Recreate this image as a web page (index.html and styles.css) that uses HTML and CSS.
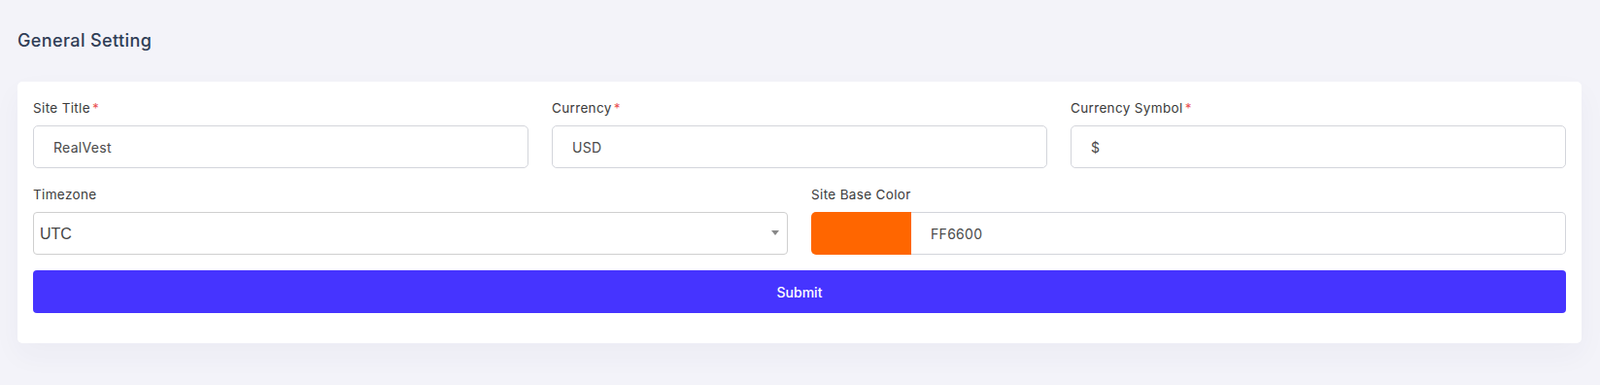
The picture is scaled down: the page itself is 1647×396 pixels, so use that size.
FILE: index.html
```html
<!DOCTYPE html>
<html>
<head>
    <title>General Setting</title>
    <link rel="stylesheet" href="styles.css">
</head>
<body>
    <div class="page">
        <h4 class="page-title">General Setting</h4>
        <div class="card">
            <form class="settings-form">
                <div class="row row-3">
                    <div class="form-group">
                        <label>Site Title<span class="req">*</span></label>
                        <input type="text" class="form-control" value="RealVest">
                    </div>
                    <div class="form-group">
                        <label>Currency<span class="req">*</span></label>
                        <input type="text" class="form-control" value="USD">
                    </div>
                    <div class="form-group">
                        <label>Currency Symbol<span class="req">*</span></label>
                        <input type="text" class="form-control" value="$">
                    </div>
                </div>
                <div class="row row-2">
                    <div class="form-group">
                        <label>Timezone</label>
                        <div class="select-wrap">
                            <select class="select">
                                <option>UTC</option>
                            </select>
                        </div>
                    </div>
                    <div class="form-group">
                        <label>Site Base Color</label>
                        <div class="color-group">
                            <span class="swatch"></span>
                            <input type="text" class="color-code" value="FF6600">
                        </div>
                    </div>
                </div>
                <button type="submit" class="btn-submit">Submit</button>
            </form>
        </div>
    </div>
</body>
</html>
```

FILE: styles.css
```css
body {
    margin: 0;
    background-color: #f3f3f9;
    font-family: Inter, "Noto Sans", sans-serif;
    color: #34495e;
}
.page {
    padding: 28px 19px 40px 18px;
}
.page-title {
    margin: 0 0 29px;
    font-size: 18px;
    line-height: 27px;
    font-weight: 500;
    letter-spacing: 0.4px;
    color: #2f3d56;
}
.card {
    background: #fff;
    border-radius: 5px;
    padding: 16px 16px 15px;
    box-shadow: 0 12px 30px rgba(40, 40, 90, 0.04);
}
.row {
    display: grid;
    column-gap: 24px;
}
.row-3 {
    grid-template-columns: repeat(3, 1fr);
}
.row-2 {
    grid-template-columns: repeat(2, 1fr);
}
.form-group {
    margin-bottom: 16px;
}
label {
    display: block;
    font-size: 13.5px;
    line-height: 22px;
    letter-spacing: 0.35px;
    margin-bottom: 7px;
    color: #3b3b3b;
}
.req {
    color: #ea5455;
    margin-left: 2px;
}
.form-control,
.color-code {
    display: block;
    width: 100%;
    height: 44px;
    box-sizing: border-box;
    padding: 0 20px;
    border: 1px solid #d3d5db;
    border-radius: 5px;
    font-family: Inter, "Noto Sans", sans-serif;
    font-size: 14px;
    letter-spacing: 0.3px;
    color: #4a4a4a;
    background: #fff;
    outline: none;
}
.select-wrap {
    position: relative;
}
.select-wrap::after {
    content: "";
    position: absolute;
    right: 9px;
    top: 19px;
    border-style: solid;
    border-width: 5px 4px 0 4px;
    border-color: #888 transparent transparent transparent;
}
.select {
    display: block;
    width: 100%;
    height: 44px;
    box-sizing: border-box;
    padding: 0 6px;
    border: 1px solid #cfcfcf;
    border-radius: 4px;
    background: #fff;
    font-family: "Liberation Sans", Arial, sans-serif;
    font-size: 16px;
    color: #444;
    appearance: none;
    -webkit-appearance: none;
    outline: none;
}
.color-group {
    display: flex;
    height: 44px;
}
.swatch {
    width: 103px;
    flex: none;
    background-color: #ff6600;
    border-radius: 5px 0 0 5px;
}
.color-group .color-code {
    flex: 1;
    height: 44px;
    border-left: none;
    border-radius: 0 5px 5px 0;
    border-color: #d3d5db;
}
.btn-submit {
    display: block;
    width: 100%;
    height: 44px;
    border: none;
    border-radius: 4px;
    background-color: #4634ff;
    color: #fff;
    font-family: Inter, "Noto Sans", sans-serif;
    font-size: 14px;
    font-weight: 500;
    cursor: pointer;
    margin-bottom: 16px;
}
```
